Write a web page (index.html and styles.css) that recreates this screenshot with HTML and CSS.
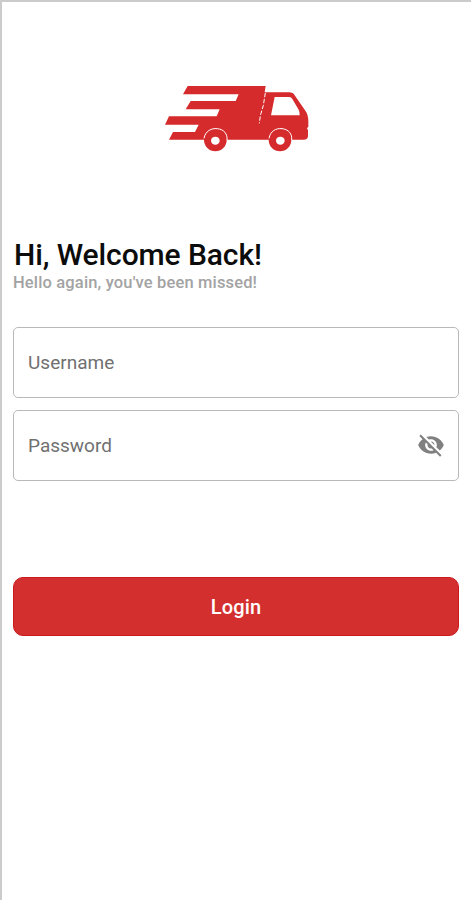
FILE: index.html
```
<!DOCTYPE html>
<html lang="en">
<head>
  <meta charset="UTF-8">
  <meta name="viewport" content="width=device-width, initial-scale=1.0">
  <title>Login</title>
  <link rel="stylesheet" href="styles.css">
</head>
<body>
  <main class="screen">
    <svg class="logo" viewBox="0 0 495 255" aria-hidden="true">
      <path class="truck" d="M98 33H332L329 52H402Q414 52 420 62L450 106Q460 119 460 139V155L456 160L459 166V183Q459 194 446 194H42L54 171H120L131 149H30L42 124H185L194 103H92L107 78H242L251 58H84Z"/>
      <path class="window" d="M359 66H403Q409 66 412 72L431 104Q434 110 434 121H348Z"/>
      <path class="seam" d="M331 54L325 91L316 122L313 145"/>
      <circle class="wheel" cx="181" cy="195" r="34"/>
      <circle class="wheel" cx="375" cy="195" r="34"/>
      <path class="arch" d="M147 190C151 168 169 159 187 161C207 163 218 177 216 195M342 190C346 168 363 159 381 161C401 163 412 177 410 195"/>
      <ellipse class="hub" cx="181" cy="197" rx="13" ry="12"/>
      <ellipse class="hub" cx="376" cy="197" rx="13" ry="12"/>
    </svg>

    <h1>Hi, Welcome Back!</h1>
    <p class="subtitle">Hello again, you've been missed!</p>

    <form>
      <div class="field">
        <input type="text" placeholder="Username" aria-label="Username">
      </div>
      <div class="field">
        <input type="password" placeholder="Password" aria-label="Password">
        <svg class="eye" viewBox="0 0 24 24" aria-hidden="true">
          <path d="M12 7c2.76 0 5 2.24 5 5 0 .65-.13 1.26-.36 1.83l2.92 2.92c1.51-1.26 2.7-2.89 3.43-4.75-1.73-4.39-6-7.5-11-7.5-1.4 0-2.74.25-3.98.7l2.16 2.16C10.74 7.13 11.35 7 12 7zM2 4.27l2.28 2.28.46.46C3.08 8.3 1.78 10.02 1 12c1.73 4.39 6 7.5 11 7.5 1.55 0 3.03-.3 4.38-.84l.42.42L19.73 22 21 20.73 3.27 3 2 4.27zM7.53 9.8l1.55 1.55c-.05.21-.08.43-.08.65 0 1.66 1.34 3 3 3 .22 0 .44-.03.65-.08l1.55 1.55c-.67.33-1.41.53-2.2.53-2.76 0-5-2.24-5-5 0-.79.2-1.53.53-2.2zm4.31-.78l3.15 3.15.02-.16c0-1.66-1.34-3-3-3l-.17.01z"/>
        </svg>
      </div>
      <button type="submit">Login</button>
    </form>
  </main>
</body>
</html>
```
FILE: styles.css
```
* {
  box-sizing: border-box;
}
body {
  margin: 0;
  background-color: #fff;
  font-family: Roboto, Arial, sans-serif;
}
.screen {
  height: 900px;
  padding: 73px 12px 0 11px;
  border-top: 2px solid #cbcbcb;
  border-left: 2px solid #cbcbcb;
}
.logo {
  display: block;
  width: 165px;
  height: 85px;
  margin-left: 142px;
}
.truck, .wheel {
  fill: #d52b2d;
}
.window, .hub {
  fill: #fff;
}
.seam, .arch {
  fill: none;
  stroke: #fff;
  stroke-width: 3;
}
.seam {
  stroke-dasharray: 13 5;
}
h1 {
  margin: 78px 0 0 1px;
  color: #0c0c0c;
  font-size: 30px;
  font-weight: 500;
  line-height: 34px;
  letter-spacing: -0.1px;
}
.subtitle {
  margin: 1px 0 0;
  color: #a3a3a3;
  font-size: 16.5px;
  font-weight: 500;
  line-height: 20px;
  letter-spacing: 0.15px;
}
form {
  margin-top: 34px;
}
.field {
  display: flex;
  align-items: center;
  height: 71px;
  margin-bottom: 12px;
  padding: 0 13px 1px 14px;
  border: 1px solid #b9b9b9;
  border-radius: 5px;
}
input {
  flex: 1;
  min-width: 0;
  padding: 0;
  border: none;
  outline: none;
  background: none;
  font-family: inherit;
  font-size: 19px;
}
input::placeholder {
  color: #707070;
}
.eye {
  width: 28px;
  height: 28px;
  fill: #808080;
}
button {
  display: block;
  width: 100%;
  height: 59px;
  margin-top: 96px;
  border: 1px solid #c9191c;
  border-radius: 10px;
  background-color: #d32f2f;
  color: #fff;
  font-family: inherit;
  font-size: 20px;
  font-weight: 500;
  letter-spacing: 0.2px;
}
```
